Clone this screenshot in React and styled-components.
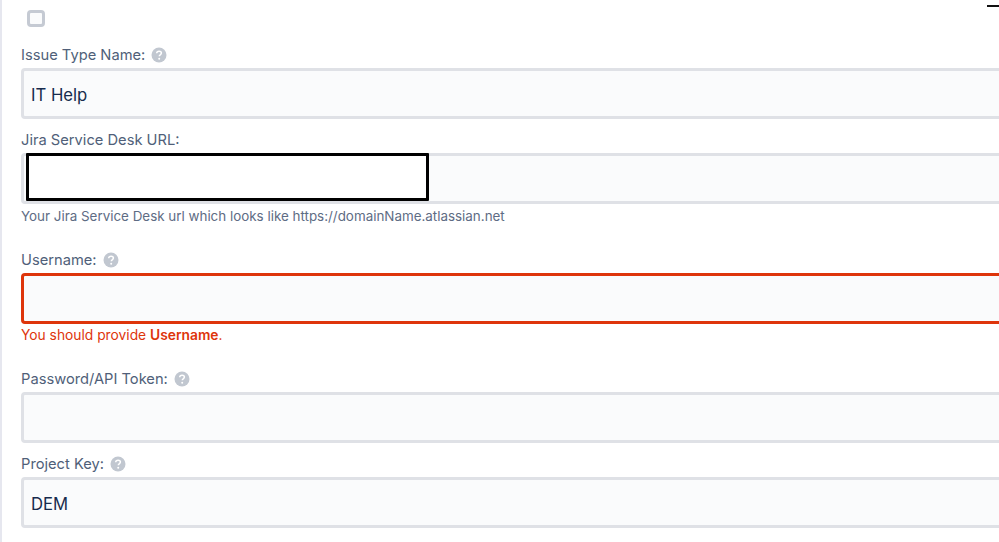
import React from 'react'
import styled, { createGlobalStyle } from 'styled-components'

const GlobalStyle = createGlobalStyle`
  html, body {
    margin: 0;
    padding: 0;
    height: 100%;
    background: #fff;
    overflow: hidden;
  }
  body {
    font-family: Inter, "Liberation Sans", sans-serif;
  }
`

const HelpIcon = () => (
  <HelpSvg viewBox="0 0 16 16" aria-hidden="true">
    <circle cx="8" cy="8" r="7.5" fill="#c1c7d0" />
    <path
      d="M5.7 6.2c.1-1.3 1.1-2 2.4-2 1.300 0 2.300.8 2.300 1.900 0 1-.6 1.400-1.200 1.800-.6.4-.9.7-.9 1.400"
      fill="none"
      stroke="#fff"
      strokeWidth="1.500"
    />
    <circle cx="8.200" cy="11.700" r="1" fill="#fff" />
  </HelpSvg>
)

const App = () => {
  return (
    <>
      <GlobalStyle />
      <Page>
        <Corner />
        <Checkbox />
        <Field $top={18}>
          <Label>
            Issue Type Name: <HelpIcon />
          </Label>
          <InputWrap>
            <Input defaultValue="IT Help" readOnly />
          </InputWrap>
        </Field>
        <Field $top={11}>
          <Label>Jira Service Desk URL:</Label>
          <InputWrap>
            <Input readOnly />
            <Redaction />
          </InputWrap>
          <Hint>Your Jira Service Desk url which looks like https://domainName.atlassian.net</Hint>
        </Field>
        <Field $top={26}>
          <Label>
            Username: <HelpIcon />
          </Label>
          <InputWrap>
            <Input $error readOnly />
          </InputWrap>
          <ErrorText>
            You should provide <strong>Username</strong>.
          </ErrorText>
        </Field>
        <Field $top={25}>
          <Label>
            Password/API Token: <HelpIcon />
          </Label>
          <InputWrap>
            <Input readOnly />
          </InputWrap>
        </Field>
        <Field $top={11}>
          <Label>
            Project Key: <HelpIcon />
          </Label>
          <InputWrap>
            <Input defaultValue="DEM" readOnly />
          </InputWrap>
        </Field>
      </Page>
    </>
  )
}

const Page = styled.div`
  position: relative;
  box-sizing: border-box;
  height: 542px;
  width: 999px;
  overflow: hidden;
  padding: 10px 0 0 19px;
  border-left: 2px solid #e6e7ef;
`
const Corner = styled.div`
  position: absolute;
  top: 5px;
  right: 0;
  width: 12px;
  height: 2px;
  background: #111;
`
const Checkbox = styled.div`
  box-sizing: border-box;
  width: 18px;
  height: 17px;
  margin-left: 6px;
  border: 3px solid #c5cad3;
  border-radius: 4px;
  background: #fafbfc;
`
const Field = styled.div`
  margin-top: ${props => props.$top}px;
`
const Label = styled.label`
  display: flex;
  align-items: center;
  gap: 6px;
  height: 20px;
  margin-bottom: 3px;
  font-size: 14.7px;
  font-weight: 400;
  color: #505f79;
`
const HelpSvg = styled.svg`
  width: 16px;
  height: 16px;
  flex: none;
`
const InputWrap = styled.div`
  position: relative;
  width: 1000px;
`
const Input = styled.input`
  display: block;
  box-sizing: border-box;
  width: 100%;
  height: 51px;
  padding: 2px 7px 0;
  border: 3px solid ${props => (props.$error ? '#de350b' : '#dfe1e6')};
  border-radius: 4px;
  background: #fafbfc;
  outline: none;
  font-family: inherit;
  font-size: 16.7px;
  color: #172b4d;
`
const Redaction = styled.div`
  position: absolute;
  top: 0;
  left: 5px;
  box-sizing: border-box;
  width: 403px;
  height: 48px;
  border: 3px solid #000;
  border-radius: 1px;
  background: #fff;
`
const Hint = styled.div`
  margin-top: 4px;
  font-size: 13.4px;
  line-height: 16px;
  color: #5e6c84;
`
const ErrorText = styled.div`
  margin-top: 3px;
  font-size: 13.8px;
  line-height: 17px;
  color: #de350b;

  strong {
    font-weight: 600;
  }
`

export default App
